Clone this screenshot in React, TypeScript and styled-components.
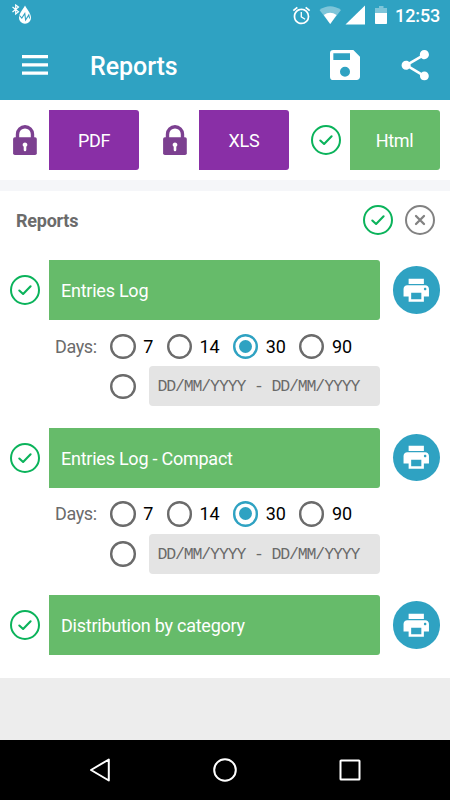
import React, { useState } from "react";
import styled, { createGlobalStyle } from "styled-components";

const BLUE = "#2fa2c2";
const GREEN = "#66bb6a";
const PURPLE = "#892fa6";

const GlobalStyle = createGlobalStyle`
  *, *::before, *::after { box-sizing: border-box; }
  body {
    margin: 0;
    background: #ededed;
    font-family: Roboto, "Liberation Sans", sans-serif;
  }
  button { font: inherit; border: 0; padding: 0; margin: 0; background: none; }
  svg { display: block; flex: none; }
`;

const Screen = styled.div`
  width: 450px;
  height: 800px;
  display: flex;
  flex-direction: column;
  background: #ededed;
  overflow: hidden;
`;

const TopArea = styled.header`
  height: 100px;
  flex: none;
  background: ${BLUE};
  color: #fff;
`;

const StatusBar = styled.div`
  height: 30px;
  display: flex;
  align-items: center;
  justify-content: space-between;
  padding: 0 10px 0 11px;
`;

const StatusIcons = styled.div`
  display: flex;
  align-items: center;
`;

const Clock = styled.span`
  width: 45px;
  margin-left: 7px;
  padding-top: 2px;
  font-size: 18px;
  font-weight: 500;
  line-height: 30px;
  letter-spacing: -0.1px;
  white-space: nowrap;
`;

const AppBar = styled.div`
  height: 70px;
  display: flex;
  align-items: center;
  padding: 0 17px 0 22px;
`;

const Title = styled.h1`
  flex: 1;
  margin: 3px 0 0 42px;
  font-size: 25px;
  font-weight: 500;
  line-height: 30px;
  letter-spacing: -0.05px;
`;

const AppActions = styled.div`
  display: flex;
  align-items: center;
  gap: 36.5px;
`;

const IconButton = styled.button`
  display: block;
  color: inherit;
`;

const FormatBar = styled.section`
  height: 80px;
  flex: none;
  display: grid;
  grid-template-columns: 150px 150.5px 149.5px;
  align-items: center;
  background: #fff;
`;

const FormatOption = styled.div`
  display: flex;
  align-items: center;
`;

const Leading = styled.div`
  width: 49px;
  flex: none;
  display: flex;
  padding-left: 10px;
`;

const FormatButton = styled.button<{ $color: string }>`
  width: 90px;
  height: 60px;
  border-radius: 0 3px 3px 0;
  background: ${(p) => p.$color};
  color: #fff;
  font-size: 18px;
  line-height: 24px;
  letter-spacing: -0.3px;
  padding-top: 2px;
`;

const Divider = styled.div`
  height: 10.5px;
  flex: none;
  background: #f5f6f9;
`;

const Card = styled.main`
  height: 487px;
  flex: none;
  background: #fff;
`;

const SectionHead = styled.div`
  height: 69.5px;
  display: flex;
  align-items: center;
  justify-content: space-between;
  padding: 0 15px 10px 16px;
`;

const SectionTitle = styled.h2`
  margin: 2px 0 0;
  font-size: 18px;
  font-weight: 700;
  line-height: 24px;
  letter-spacing: -0.25px;
  color: #6b6b6b;
`;

const SelectionTools = styled.div`
  display: flex;
  gap: 12.5px;
`;

const Report = styled.section`
  height: 167.5px;
`;

const ReportRow = styled.div`
  height: 60px;
  display: flex;
  align-items: center;
`;

const ReportButton = styled.button`
  width: 331px;
  height: 60px;
  padding: 2px 12px 0;
  border-radius: 0 3px 3px 0;
  background: ${GREEN};
  color: #fff;
  font-size: 18px;
  line-height: 24px;
  letter-spacing: -0.24px;
  text-align: left;
`;

const PrintButton = styled.button`
  width: 47.5px;
  height: 47.5px;
  margin-left: 12.5px;
  display: grid;
  place-items: center;
  border-radius: 50%;
  background: ${BLUE};
  color: #fff;
`;

const DaysRow = styled.div`
  height: 40px;
  margin-top: 6.3px;
  padding-left: 55px;
  display: flex;
  align-items: center;
`;

const DaysLabel = styled.span`
  width: 55.3px;
  font-size: 18px;
  letter-spacing: -0.4px;
  color: #6b6b6b;
`;

const DayOption = styled.label<{ $width: number }>`
  width: ${(p) => p.$width}px;
  display: flex;
  align-items: center;
  gap: 7.5px;
  font-size: 18px;
  line-height: 25px;
  letter-spacing: -0.15px;
  color: #000;
`;

const Radio = styled.span<{ $on?: boolean }>`
  width: 25.5px;
  height: 25.5px;
  flex: none;
  display: grid;
  place-items: center;
  border-radius: 50%;
  box-shadow: inset 0 0 0 2.4px ${(p) => (p.$on ? BLUE : "#6b6b6b")};
  &::after {
    content: "";
    width: 13px;
    height: 13px;
    border-radius: 50%;
    background: ${(p) => (p.$on ? BLUE : "transparent")};
  }
`;

const RangeRow = styled.div`
  height: 40px;
  padding-left: 110.3px;
  display: flex;
  align-items: center;
  gap: 13.2px;
`;

const RangeField = styled.div`
  width: 231px;
  height: 40px;
  padding: 1px 0 0 8.5px;
  border-radius: 4px;
  background: #e4e4e4;
  color: #6a6a6a;
  font-family: "Liberation Mono", monospace;
  font-size: 16.5px;
  line-height: 40px;
  letter-spacing: -1.13px;
  white-space: pre;
`;

const NavBar = styled.nav`
  height: 60.5px;
  margin-top: auto;
  flex: none;
  display: grid;
  grid-template-columns: repeat(3, 125px);
  justify-content: center;
  justify-items: center;
  align-items: center;
  background: #000;
`;

const AppBadge = () => (
  <svg width="22" height="22" viewBox="0 0 22 22">
    <path d="M14 1.500C11.500 6 8 9.500 8 14a6 5.700 0 0 0 12 0c0-4.500-3.500-8-6-12.500Z" fill="#fff" />
    <path d="m8.500 11.500 2.300 2.500 3-4.500.8 6.500 3.200-5 .8 3.500" fill="none" stroke={BLUE} strokeWidth="1.100" />
    <path d="m1.500 3 6 4.800L4.700 10V1l2.800 2-6 5" fill="none" stroke="#fff" strokeWidth="1.200" />
  </svg>
);

const AlarmIcon = () => (
  <svg width="21" height="21" viewBox="0 0 24 24" fill="currentColor">
    <path d="M22 5.720l-4.600-3.860-1.290 1.530 4.600 3.860L22 5.720zM7.880 3.390L6.600 1.860 2 5.710l1.290 1.530 4.590-3.850zM12.500 8H11v6l4.750 2.850.75-1.230-4-2.370V8zM12 4c-4.970 0-9 4.030-9 9s4.020 9 9 9a9 9 0 1 0 0-18zm0 16c-3.870 0-7-3.130-7-7s3.130-7 7-7 7 3.130 7 7-3.130 7-7 7z" />
  </svg>
);

const SignalIcons = () => (
  <svg width="76" height="20" viewBox="312 5 76 20" fill="#fff">
    <path d="M319.500 10Q330 2.500 341 10L330.200 24Z" opacity=".38" />
    <path d="M323.800 15Q330 10.500 336.600 15L330.200 24Z" />
    <path d="M365 5.500V24.500H345.500Z" />
    <path d="M379 6h4.500v2H387v5H375V8h4Z" opacity=".38" />
    <path d="M375 13h12v10.200q0 .8-.8.800h-10.400q-.8 0-.8-.8Z" />
  </svg>
);

const MenuIcon = () => (
  <svg width="26" height="20" viewBox="0 0 26 20" fill="currentColor">
    <path d="M0 0h26v3.300H0zM0 8.200h26v3.300H0zM0 16.400h26v3.300H0z" />
  </svg>
);

const SaveIcon = () => (
  <svg width="30" height="30" viewBox="3 3 18 18" fill="currentColor">
    <path d="M17 3H5a2 2 0 0 0-2 2v14a2 2 0 0 0 2 2h14c1.100 0 2-.9 2-2V7l-4-4zm-5 16a3 3 0 1 1 0-6 3 3 0 0 1 0 6zm3-10H5V5h10v4z" />
  </svg>
);

const ShareIcon = () => (
  <svg width="36.500" height="36.500" viewBox="0 0 24 24" fill="currentColor">
    <path d="M18 16.080c-.76 0-1.440.3-1.960.77L8.910 12.700c.05-.23.09-.46.09-.7s-.04-.47-.09-.7l7.050-4.110c.54.5 1.250.81 2.040.81 1.660 0 3-1.340 3-3s-1.340-3-3-3-3 1.340-3 3c0 .24.04.47.09.7L8.040 9.810C7.500 9.310 6.790 9 6 9c-1.660 0-3 1.340-3 3s1.340 3 3 3c.79 0 1.500-.31 2.040-.81l7.120 4.160c-.05.21-.08.43-.08.65 0 1.610 1.310 2.920 2.920 2.920s2.920-1.310 2.920-2.920-1.310-2.920-2.920-2.920z" />
  </svg>
);

const LockIcon = () => (
  <svg width="30" height="30" viewBox="0 0 30 30">
    <path d="M7.500 14V9.200a7.500 7.500 0 0 1 15 0V14" fill="none" stroke="#7c4090" strokeWidth="3.400" />
    <rect x="3.100" y="12.200" width="23.700" height="17.800" rx="1.800" fill="#7c4090" />
    <path d="M15 17.400a2.400 2.400 0 0 1 1.300 4.400V25a1.300 1.300 0 0 1-2.600 0v-3.200A2.400 2.400 0 0 1 15 17.400Z" fill="#fff" />
  </svg>
);

const CheckIcon = () => (
  <svg width="30" height="30" viewBox="0 0 30 30" fill="none" stroke="#0bb35b">
    <circle cx="15" cy="15" r="14" strokeWidth="2" />
    <path d="m9.300 15.500 3.800 3.500 7.500-7.700" strokeWidth="2.100" strokeLinecap="round" strokeLinejoin="round" />
  </svg>
);

const ClearIcon = () => (
  <svg width="30" height="30" viewBox="0 0 30 30" fill="none" stroke="#828282">
    <circle cx="15" cy="15" r="14" strokeWidth="2" />
    <path d="m11 11 8 8m0-8-8 8" strokeWidth="2.300" strokeLinecap="round" />
  </svg>
);

const PrintIcon = () => (
  <svg width="30.500" height="30.500" viewBox="0 0 24 24" fill="currentColor">
    <path d="M19 8H5c-1.660 0-3 1.340-3 3v6h4v4h12v-4h4v-6c0-1.660-1.340-3-3-3zm-3 11H8v-5h8v5zm3-7c-.55 0-1-.45-1-1s.45-1 1-1 1 .45 1 1-.45 1-1 1zm-1-9H6v4h12V3z" />
  </svg>
);

const BackIcon = () => (
  <svg width="24" height="26" viewBox="0 0 24 26" fill="none" stroke="#fff" strokeWidth="2" strokeLinejoin="round">
    <path d="M20.800 2.500v21L3 13Z" />
  </svg>
);

const HomeIcon = () => (
  <svg width="24" height="24" viewBox="0 0 24 24" fill="none" stroke="#fff" strokeWidth="2">
    <circle cx="12" cy="12" r="10.800" />
  </svg>
);

const RecentIcon = () => (
  <svg width="22" height="22" viewBox="0 0 22 22" fill="none" stroke="#fff" strokeWidth="2">
    <rect x="1.500" y="1.500" width="19" height="19" rx=".6" />
  </svg>
);

const DAY_OPTIONS = [
  { days: 7, width: 56.3 },
  { days: 14, width: 66.2 },
  { days: 30, width: 66.2 },
  { days: 90, width: 66 },
];

const FORMATS = [
  { name: "PDF", locked: true },
  { name: "XLS", locked: true },
  { name: "Html", locked: false },
];

const REPORTS = [
  { name: "Entries Log", ranged: true },
  { name: "Entries Log - Compact", ranged: true },
  { name: "Distribution by category", ranged: false },
];

function DayPicker() {
  const [selected, setSelected] = useState(30);
  return (
    <>
      <DaysRow>
        <DaysLabel>Days:</DaysLabel>
        {DAY_OPTIONS.map(({ days, width }) => (
          <DayOption key={days} $width={width} onClick={() => setSelected(days)}>
            <Radio $on={selected === days} />
            {days}
          </DayOption>
        ))}
      </DaysRow>
      <RangeRow>
        <Radio $on={selected === 0} onClick={() => setSelected(0)} />
        <RangeField>DD/MM/YYYY - DD/MM/YYYY</RangeField>
      </RangeRow>
    </>
  );
}

export default function App() {
  return (
    <Screen>
      <GlobalStyle />
      <TopArea>
        <StatusBar>
          <AppBadge />
          <StatusIcons>
            <AlarmIcon />
            <SignalIcons />
            <Clock>12:53</Clock>
          </StatusIcons>
        </StatusBar>
        <AppBar>
          <IconButton aria-label="Menu"><MenuIcon /></IconButton>
          <Title>Reports</Title>
          <AppActions>
            <IconButton aria-label="Save"><SaveIcon /></IconButton>
            <IconButton aria-label="Share"><ShareIcon /></IconButton>
          </AppActions>
        </AppBar>
      </TopArea>
      <FormatBar>
        {FORMATS.map(({ name, locked }) => (
          <FormatOption key={name}>
            <Leading>{locked ? <LockIcon /> : <CheckIcon />}</Leading>
            <FormatButton $color={locked ? PURPLE : GREEN}>{name}</FormatButton>
          </FormatOption>
        ))}
      </FormatBar>
      <Divider />
      <Card>
        <SectionHead>
          <SectionTitle>Reports</SectionTitle>
          <SelectionTools>
            <IconButton aria-label="Select all"><CheckIcon /></IconButton>
            <IconButton aria-label="Clear"><ClearIcon /></IconButton>
          </SelectionTools>
        </SectionHead>
        {REPORTS.map(({ name, ranged }) => (
          <Report key={name}>
            <ReportRow>
              <Leading><CheckIcon /></Leading>
              <ReportButton>{name}</ReportButton>
              <PrintButton aria-label="Print"><PrintIcon /></PrintButton>
            </ReportRow>
            {ranged && <DayPicker />}
          </Report>
        ))}
      </Card>
      <NavBar>
        <BackIcon />
        <HomeIcon />
        <RecentIcon />
      </NavBar>
    </Screen>
  );
}
